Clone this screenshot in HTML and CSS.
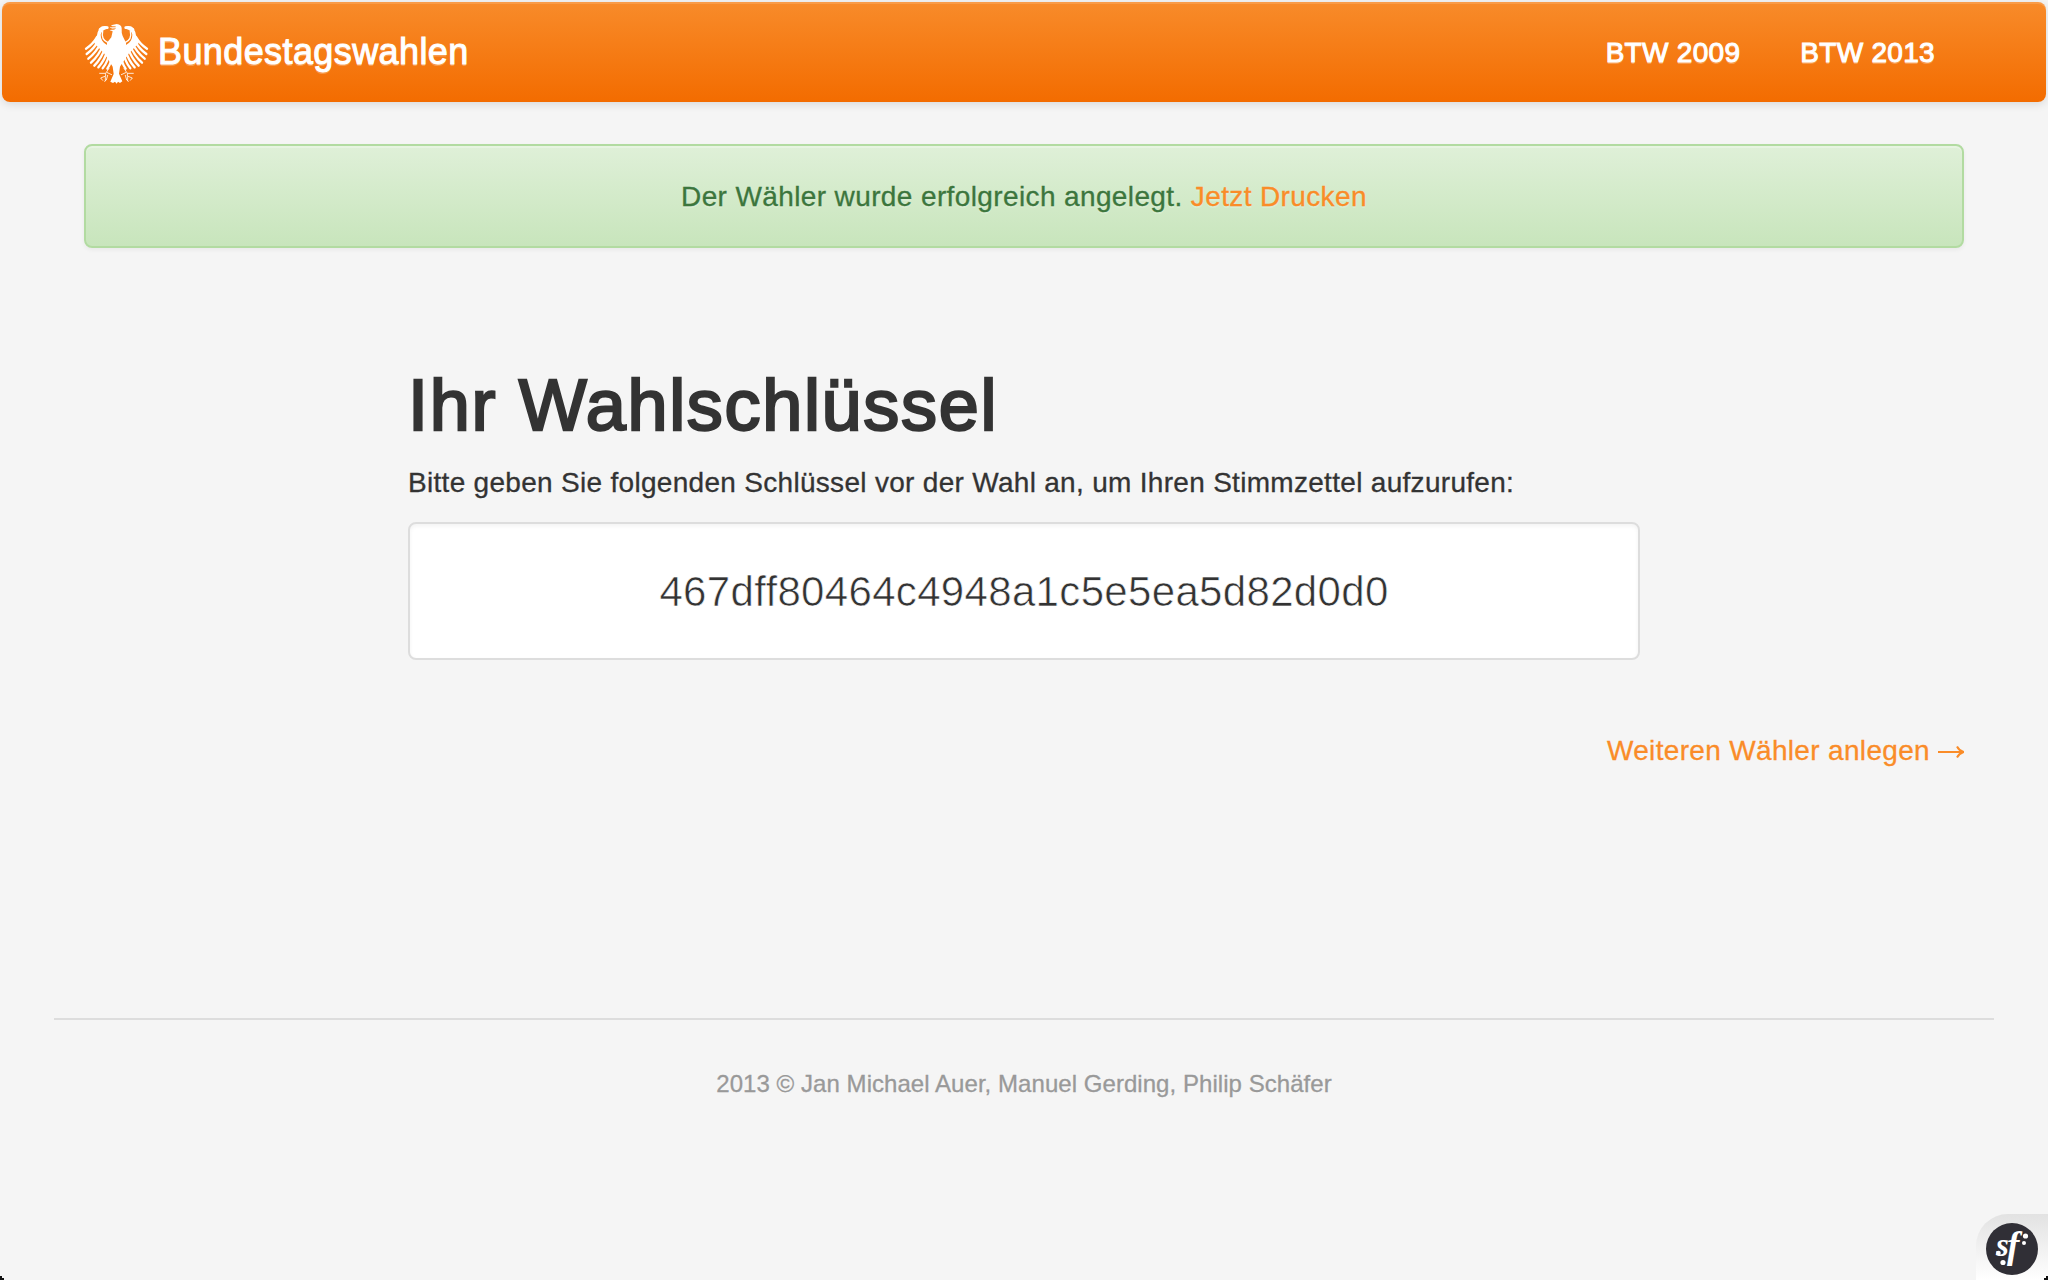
FILE: index.html
```html
<!DOCTYPE html>
<html lang="de">
<head>
<meta charset="utf-8">
<title>Bundestagswahlen</title>
<link rel="stylesheet" href="styles.css">
</head>
<body>
<header class="navbar">
  <a class="brand">
    <svg class="eagle" viewBox="0 0 240 240" aria-hidden="true">
      <defs>
        <g id="wing" fill="none" stroke="#fff" stroke-linecap="round">
          <path d="M94 38Q80 34 70 44Q63 54 62 68L54 86L84 118L108 152L114 100L92 92Q74 82 74 62Q76 48 94 44Z" fill="#fff" stroke="none"/>
          <path d="M94 41Q80 38 72 46" stroke-width="8"/>
          <path d="M80 52Q74 76 96 86L114 88" stroke-width="4"/>
          <g stroke-width="7">
            <path d="M64 68Q50 92 30 104"/>
            <path d="M70 76Q54 104 32 120"/>
            <path d="M76 84Q60 116 37 134"/>
            <path d="M82 92Q68 126 45 146"/>
            <path d="M89 98Q76 134 55 155"/>
            <path d="M96 104Q86 140 67 160"/>
            <path d="M102 110Q96 144 80 163"/>
            <path d="M109 118Q106 148 94 164"/>
          </g>
          <g stroke-width="2.500">
            <path d="M99 163L89 178H71M94 176L107 182M89 179V186L74 192L80 199M88 188V200M95 184L91 198L86 202"/>
          </g>
        </g>
      </defs>
      <use href="#wing"/>
      <use href="#wing" transform="translate(243) scale(-1 1)"/>
      <path fill="#fff" d="M105 34L122 30Q137 32 137 43Q136 57 140 66L150 86V130L139 146L132 158L129 179L139 202L132 207L126 203L122 209L117 203L111 207L103 203L113 180L110 158L103 146L93 130V86L106 70L110 52L101 49L109 45L101 40L110 38Z"/>
      <path d="M104 37L119 38M104 42L119 43M104 47L116 46" stroke="#f78420" stroke-width="2.200" fill="none"/>
    </svg>
    <span class="brand-name">Bundestagswahlen</span>
  </a>
  <nav class="nav"><a>BTW 2009</a><a>BTW 2013</a></nav>
</header>
<main class="container">
  <div class="alert">Der Wähler wurde erfolgreich angelegt. <a class="link">Jetzt Drucken</a></div>
  <section class="voter">
    <h1>Ihr Wahlschlüssel</h1>
    <p class="lead">Bitte geben Sie folgenden Schlüssel vor der Wahl an, um Ihren Stimmzettel aufzurufen:</p>
    <div class="key">467dff80464c4948a1c5e5ea5d82d0d0</div>
  </section>
  <a class="next link"><span>Weiteren Wähler anlegen</span>
    <svg class="arrow" viewBox="0 0 26 14" aria-hidden="true"><path d="M0 7h24M19 1.500q2 4 6.500 5.500-4.500 1.500-6.500 5.500" fill="none" stroke="currentColor" stroke-width="2"/></svg>
  </a>
</main>
<footer class="footer">2013 © Jan Michael Auer, Manuel Gerding, Philip Schäfer</footer>
<div class="toolbar">
  <svg class="sf" viewBox="0 0 52 52" aria-hidden="true">
    <circle cx="26" cy="26" r="26" fill="#302f36"/>
    <g fill="#fff">
      <text x="10" y="33" font-size="33">s</text>
      <text x="21" y="34.500" font-size="37">f</text>
      <circle cx="39.500" cy="13" r="2.600"/>
      <circle cx="38" cy="20" r="2"/>
      <circle cx="17" cy="39.500" r="2.600"/>
      <circle cx="12.500" cy="30" r="2.300"/>
    </g>
  </svg>
</div>
<i class="corner corner-left"></i>
<i class="corner corner-right"></i>
</body>
</html>
```
FILE: styles.css
```css
body {
  position: relative;
  box-sizing: border-box;
  height: 1280px;
  margin: 0;
  padding: 2px;
  overflow: hidden;
  background: #f5f5f5;
  color: #333;
  font: 28px/40px "Liberation Sans", Arial, sans-serif;
  letter-spacing: .33px;
}

.navbar {
  box-sizing: border-box;
  height: 100px;
  padding: 0 111px 0 74px;
  display: flex;
  justify-content: space-between;
  border-radius: 8px;
  background: linear-gradient(#f88b2a, #f36c00);
  box-shadow: inset 0 2px 0 rgba(255, 255, 255, .15), 0 2px 10px rgba(0, 0, 0, .12);
  color: #fff;
  text-shadow: 0 2px 0 rgba(255, 255, 255, .25);
}

.brand {
  display: flex;
  padding-top: 12px;
  font-size: 36px;
  letter-spacing: .4px;
  -webkit-text-stroke: 1px #fff;
}

.eagle { width: 80px; height: 80px; -webkit-text-stroke: 0; }
.brand-name { padding: 18px 0 0 2px; }

.nav {
  display: flex;
  gap: 60px;
  padding-top: 31px;
  letter-spacing: .3px;
  -webkit-text-stroke: 1px #fff;
}

.container { padding: 42px 82px 0; }
.link { color: #fa8c28; }

.alert {
  box-sizing: border-box;
  height: 104px;
  padding: 31px 0 29px;
  border: 2px solid #b2dba1;
  border-radius: 8px;
  background: linear-gradient(#dff0d8, #c8e5bc);
  box-shadow: inset 0 2px 0 rgba(255, 255, 255, .25), 0 2px 4px rgba(0, 0, 0, .05);
  color: #3c763d;
  letter-spacing: .38px;
  text-align: center;
  text-shadow: 0 2px 0 rgba(255, 255, 255, .2);
}

.alert, .lead, .next, .footer { -webkit-text-stroke: .3px currentColor; }

.voter { width: 1232px; margin: 117px auto 0; }

h1 {
  margin: 0 0 18px;
  font-size: 72px;
  font-weight: 400;
  line-height: 80px;
  letter-spacing: 1.68px;
  -webkit-text-stroke: 2.4px #333;
}

.lead { margin: 0 0 19px; letter-spacing: .3px; }

.key {
  box-sizing: border-box;
  height: 138px;
  padding-top: 38px;
  border: 2px solid #ddd;
  border-radius: 8px;
  background: #fff;
  box-shadow: inset 0 2px 4px rgba(0, 0, 0, .05);
  font-size: 42px;
  line-height: 60px;
  text-align: center;
  -webkit-text-stroke: .6px #fff;
}

.next {
  display: flex;
  justify-content: flex-end;
  align-items: center;
  gap: 8px;
  margin-top: 71px;
}

.arrow { width: 26px; height: 14px; padding-top: 2px; }

.footer {
  margin: 247px 52px 0;
  padding-top: 44px;
  border-top: 2px solid #ddd;
  color: #999;
  font-size: 24px;
  letter-spacing: .05px;
  text-align: center;
}

.toolbar {
  position: absolute;
  right: 0;
  bottom: 0;
  box-sizing: border-box;
  width: 72px;
  height: 66px;
  padding: 9px 0 0 10px;
  border-radius: 32px 0 0 0;
  background: linear-gradient(#e2e2e2, #fff);
}

.sf {
  display: block;
  width: 52px;
  height: 52px;
  font: italic bold 34px "Liberation Serif", serif;
  letter-spacing: 0;
}

.corner { position: absolute; bottom: 0; width: 4px; height: 4px; background: #111; }
.corner-left { left: 0; clip-path: polygon(0 0, 50% 0, 50% 50%, 100% 50%, 100% 100%, 0 100%); }
.corner-right { right: 0; clip-path: polygon(50% 0, 100% 0, 100% 100%, 0 100%, 0 50%, 50% 50%); }
```
